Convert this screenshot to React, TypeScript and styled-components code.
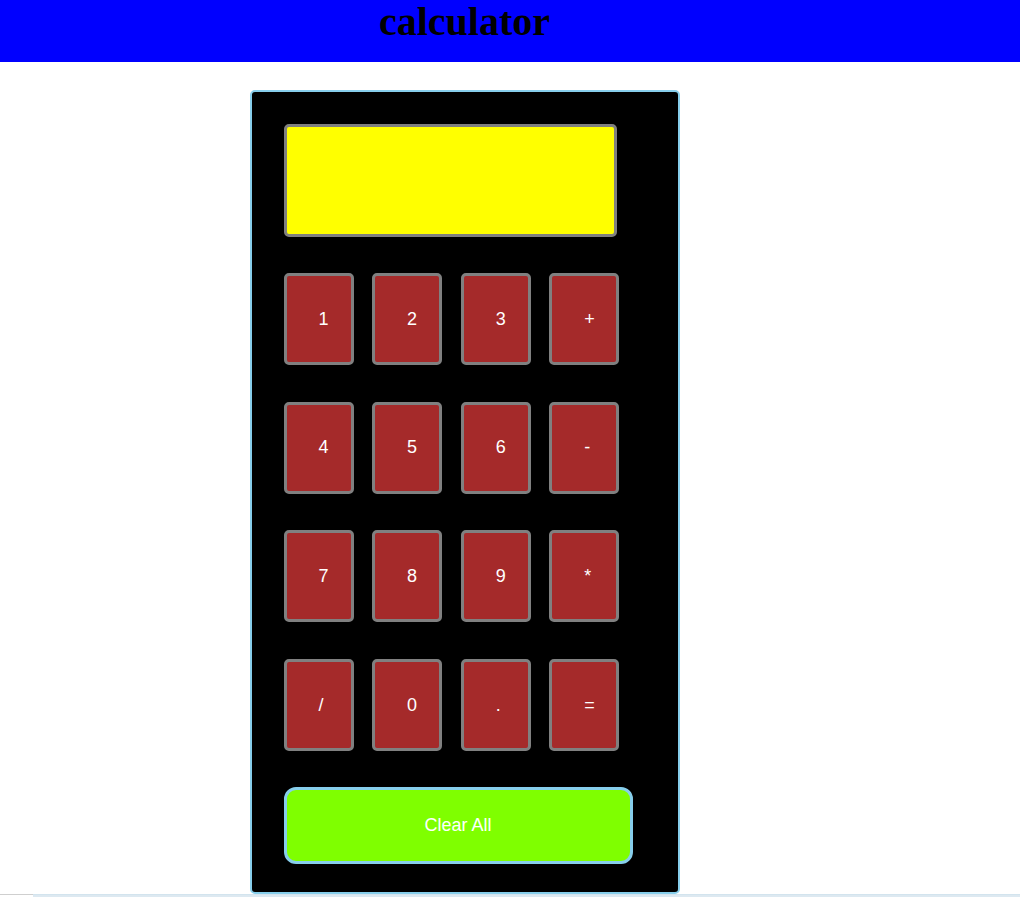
import React from "react";
import styled, { createGlobalStyle } from "styled-components";

const Global = createGlobalStyle`
  html, body { margin: 0; padding: 0; background: #ffffff; }
  body { font-family: "Liberation Serif", "Times New Roman", serif; overflow: hidden; }
`;

const Header = styled.header`
  background: #0000ff;
  height: 62px;
`;

const Title = styled.h1`
  margin: 0;
  width: 929px;
  text-align: center;
  font-family: "Liberation Serif", "Times New Roman", serif;
  font-weight: bold;
  font-size: 40px;
  line-height: 44px;
  color: #000000;
`;

const Main = styled.main`
  width: 929px;
  display: flex;
  justify-content: center;
  padding-top: 28px;
`;

const Calculator = styled.div`
  box-sizing: border-box;
  width: 430px;
  height: 804px;
  background: #000000;
  border: 2px solid #87ceeb;
  border-radius: 5px;
  padding: 32px 0 0 32px;
  display: flex;
  flex-direction: column;
  align-items: flex-start;
`;

const Display = styled.div`
  box-sizing: border-box;
  width: 333px;
  height: 113px;
  background: #ffff00;
  border: 3px solid #808080;
  border-radius: 5px;
`;

const Keys = styled.div`
  display: grid;
  grid-template-columns: repeat(4, 70px);
  column-gap: 18.6px;
  row-gap: 36.7px;
  margin-top: 36px;
`;

const Key = styled.button`
  box-sizing: border-box;
  width: 70px;
  height: 92px;
  background: #a52a2a;
  border: 3px solid #808080;
  border-radius: 5px;
  color: #ffffff;
  font-family: "Liberation Sans", Arial, sans-serif;
  font-size: 18px;
  text-align: left;
  padding: 0 0 0 32px;
  margin: 0;
`;

const Clear = styled.button`
  box-sizing: border-box;
  width: 349px;
  height: 77px;
  margin-top: 36px;
  background: #7fff00;
  border: 3px solid #87ceeb;
  border-radius: 12px;
  color: #ffffff;
  font-family: "Liberation Sans", Arial, sans-serif;
  font-size: 18px;
  padding: 0;
`;

const Strip = styled.div`
  display: flex;
  height: 3px;
`;

const StripPart = styled.div<{ $w?: number; $c: string }>`
  background: ${(p) => p.$c};
  flex: ${(p) => (p.$w ? `0 0 ${p.$w}px` : "1 1 auto")};
  border-top: 1px solid ${(p) => (p.$w ? "#cfcfcf" : "#d3e4ee")};
`;

const keys = ["1", "2", "3", "+", "4", "5", "6", "-", "7", "8", "9", "*", "/", "0", ".", "="];

export default function App() {
  return (
    <>
      <Global />
      <Header>
        <Title>calculator</Title>
      </Header>
      <Main>
        <Calculator>
          <Display />
          <Keys>
            {keys.map((k) => (
              <Key key={k}>{k}</Key>
            ))}
          </Keys>
          <Clear>Clear All</Clear>
        </Calculator>
      </Main>
      <Strip>
        <StripPart $w={33} $c="#ffffff" />
        <StripPart $c="#dde9f1" />
      </Strip>
    </>
  );
}
